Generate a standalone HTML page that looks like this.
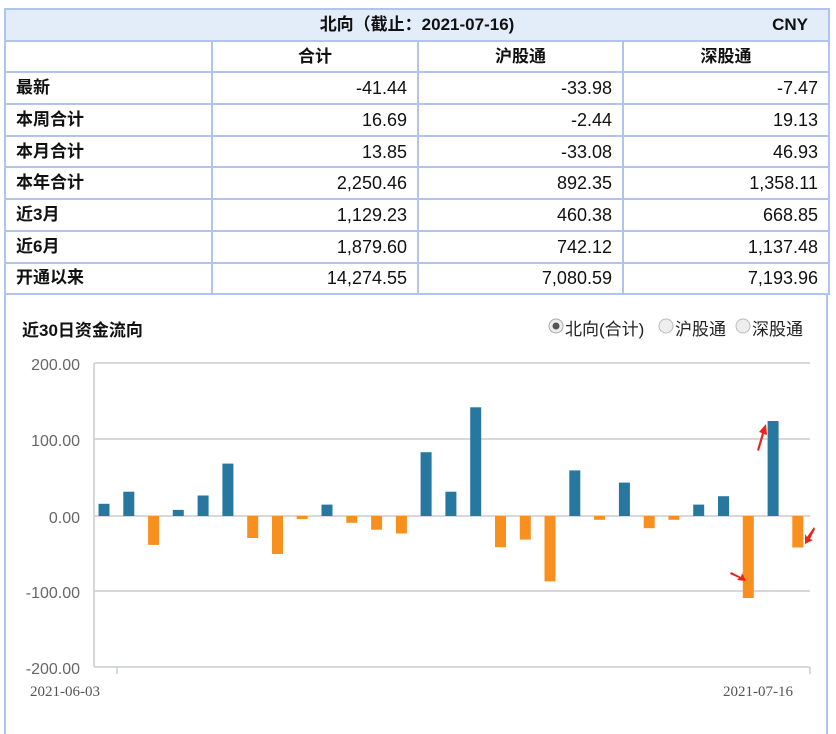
<!DOCTYPE html>
<html><head><meta charset="utf-8">
<style>
body{margin:0;width:836px;height:731px;background:#fff;font-family:"Liberation Sans","Noto Sans CJK SC",sans-serif;position:relative;overflow:hidden}
table{position:absolute;left:4px;top:8px;border-collapse:collapse;width:824px;table-layout:fixed}
td{border:2px solid #b0c4ec;height:29.7px;padding:0 10px;font-size:18px;color:#111;vertical-align:middle;line-height:20px}
td.l{font-weight:bold;font-size:17px}
td.n{text-align:right}
tr.h td{background:#e3ecf9;font-weight:bold;font-size:17px;text-align:center}
tr.c td{font-weight:bold;font-size:17px;text-align:center}
.box{position:absolute;left:4px;top:294px;width:820px;height:440px;border-left:2px solid #b0c4ec;border-right:2px solid #b0c4ec}
</style></head><body>
<div class="box"></div>
<table>
<colgroup><col style="width:207px"><col style="width:206px"><col style="width:205px"><col style="width:206px"></colgroup>
<tr class="h"><td colspan="4" style="position:relative">北向（截止：2021-07-16)<span style="position:absolute;right:20px;top:5px">CNY</span></td></tr>
<tr class="c"><td></td><td>合计</td><td>沪股通</td><td>深股通</td></tr>
<tr><td class="l">最新</td><td class="n">-41.44</td><td class="n">-33.98</td><td class="n">-7.47</td></tr>
<tr><td class="l">本周合计</td><td class="n">16.69</td><td class="n">-2.44</td><td class="n">19.13</td></tr>
<tr><td class="l">本月合计</td><td class="n">13.85</td><td class="n">-33.08</td><td class="n">46.93</td></tr>
<tr><td class="l">本年合计</td><td class="n">2,250.46</td><td class="n">892.35</td><td class="n">1,358.11</td></tr>
<tr><td class="l">近3月</td><td class="n">1,129.23</td><td class="n">460.38</td><td class="n">668.85</td></tr>
<tr><td class="l">近6月</td><td class="n">1,879.60</td><td class="n">742.12</td><td class="n">1,137.48</td></tr>
<tr><td class="l">开通以来</td><td class="n">14,274.55</td><td class="n">7,080.59</td><td class="n">7,193.96</td></tr>
</table>
<svg width="836" height="731" style="position:absolute;left:0;top:0">
<text x="22" y="336" font-size="17" font-weight="bold" fill="#111" font-family="Liberation Sans,Noto Sans CJK SC,sans-serif">近30日资金流向</text>
<g font-family="Liberation Sans,Noto Sans CJK SC,sans-serif" font-size="17" fill="#222">
<circle cx="556" cy="326" r="7" fill="#eee" stroke="#aaa"/><circle cx="556" cy="326" r="3.5" fill="#555"/>
<text x="565" y="335">北向(合计)</text>
<circle cx="666" cy="326" r="7" fill="#eee" stroke="#bbb"/><text x="675" y="335">沪股通</text>
<circle cx="743" cy="326" r="7" fill="#eee" stroke="#bbb"/><text x="752" y="335">深股通</text>
</g>
<g stroke="#c8ccd4" stroke-width="1.5">
<line x1="94" y1="363" x2="810" y2="363"/><line x1="94" y1="439" x2="810" y2="439"/>
<line x1="94" y1="516" x2="810" y2="516"/><line x1="94" y1="591" x2="810" y2="591"/>
<line x1="94" y1="667" x2="810" y2="667"/><line x1="94" y1="363" x2="94" y2="667"/>
<line x1="117" y1="667" x2="117" y2="674"/><line x1="810" y1="667" x2="810" y2="674"/>
</g>
<g font-family="Liberation Sans,sans-serif" font-size="16" fill="#666" text-anchor="end">
<text x="80" y="370">200.00</text><text x="80" y="446">100.00</text><text x="80" y="523">0.00</text>
<text x="80" y="598">-100.00</text><text x="80" y="674">-200.00</text></g>
<g font-family="Liberation Serif,serif" font-size="15" fill="#555">
<text x="30" y="696">2021-06-03</text><text x="723" y="696">2021-07-16</text></g>
<g fill="#27779f">
<rect x="98.5" y="503.8" width="11" height="12.2"/><rect x="123.3" y="491.7" width="11" height="24.3"/>
<rect x="172.8" y="509.9" width="11" height="6.1"/><rect x="197.6" y="495.5" width="11" height="20.5"/>
<rect x="222.4" y="463.6" width="11" height="52.4"/><rect x="321.5" y="504.6" width="11" height="11.4"/>
<rect x="420.6" y="452.2" width="11" height="63.8"/><rect x="445.4" y="491.7" width="11" height="24.3"/>
<rect x="470.2" y="407.3" width="11" height="108.7"/><rect x="569.3" y="470.4" width="11" height="45.6"/>
<rect x="618.9" y="482.6" width="11" height="33.4"/><rect x="693.2" y="504.6" width="11" height="11.4"/>
<rect x="718" y="496.2" width="11" height="19.8"/><rect x="767.6" y="421" width="11" height="95"/>
</g>
<g fill="#f7901e">
<rect x="148.1" y="516" width="11" height="28.9"/><rect x="247.2" y="516" width="11" height="22"/>
<rect x="272" y="516" width="11" height="38"/><rect x="296.7" y="516" width="11" height="3"/>
<rect x="346.3" y="516" width="11" height="6.8"/><rect x="371.1" y="516" width="11" height="13.7"/>
<rect x="395.9" y="516" width="11" height="17.5"/><rect x="495" y="516" width="11" height="31.2"/>
<rect x="519.8" y="516" width="11" height="23.6"/><rect x="544.5" y="516" width="11" height="65.4"/>
<rect x="594.1" y="516" width="11" height="3.8"/><rect x="643.7" y="516" width="11" height="12.2"/>
<rect x="668.4" y="516" width="11" height="3.8"/><rect x="742.8" y="516" width="11" height="82"/>
<rect x="792.3" y="516" width="11" height="31.5"/>
</g>
<g fill="#e8251c">
<polygon points="757,450 762,433 759,432 766,424 767,435 764,434 759,451"/>
<polygon points="731,572 741,577 742,573 746,581 737,580 739,578 730,574"/>
<polygon points="814,527 807,537 805,534 805,544 813,540 810,539 815,529"/>
</g>
</svg>
</body></html>
